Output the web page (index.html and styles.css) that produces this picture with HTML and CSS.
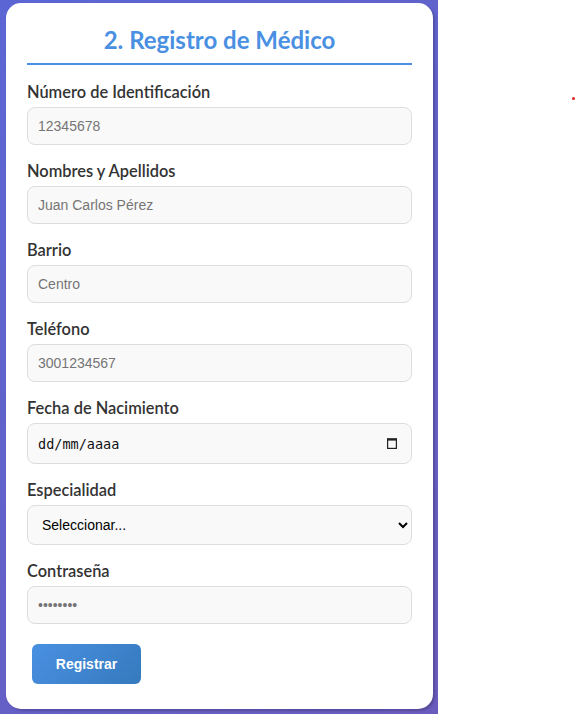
FILE: index.html
```html
<!DOCTYPE html>
<html lang="es">
<head>
<meta charset="utf-8">
<title>Registro de Médico</title>
<link rel="stylesheet" href="styles.css">
</head>
<body>
<div class="stage">
  <form class="card">
    <h2 class="title">2. Registro de Médico</h2>
    <div class="group">
      <label class="label">Número de Identificación</label>
      <input class="field" type="text" placeholder="12345678">
    </div>
    <div class="group">
      <label class="label">Nombres y Apellidos</label>
      <input class="field" type="text" placeholder="Juan Carlos Pérez">
    </div>
    <div class="group">
      <label class="label">Barrio</label>
      <input class="field" type="text" placeholder="Centro">
    </div>
    <div class="group">
      <label class="label">Teléfono</label>
      <input class="field" type="text" placeholder="3001234567">
    </div>
    <div class="group">
      <label class="label">Fecha de Nacimiento</label>
      <div class="field date">
        <span class="date-text">dd/mm/aaaa</span>
        <svg class="cal" width="12" height="13" viewBox="0 0 12 13" aria-hidden="true">
          <rect x="1.6" y="2" width="8.8" height="9.4" fill="none" stroke="#222222" stroke-width="1.2"/>
          <rect x="1" y="1.4" width="10" height="2.2" fill="#222222"/>
        </svg>
      </div>
    </div>
    <div class="group">
      <label class="label">Especialidad</label>
      <select class="field select">
        <option>Seleccionar...</option>
      </select>
    </div>
    <div class="group">
      <label class="label">Contraseña</label>
      <input class="field" type="password" placeholder="••••••••">
    </div>
    <button class="btn" type="button">Registrar</button>
  </form>
</div>
<div class="dot"></div>
</body>
</html>
```
FILE: styles.css
```css
html, body {
  margin: 0;
  padding: 0;
  background: #ffffff;
}
body {
  display: flex;
  align-items: flex-start;
  min-height: 714px;
}
.stage {
  width: 438px;
  height: 714px;
  box-sizing: border-box;
  padding: 3px 5px 0 6px;
  background: linear-gradient(135deg, #5b66d4 0%, #6a5cbd 100%);
}
.card {
  width: 427px;
  box-sizing: border-box;
  background: #ffffff;
  border-radius: 15px;
  padding: 20px 21px 25px;
  box-shadow: 2px 2px 2px rgba(0, 0, 0, 0.18);
}
.title {
  margin: 4px 0 18px;
  padding-bottom: 10px;
  border-bottom: 2px solid #4a90e2;
  text-align: center;
  color: #4a90e2;
  font-family: Lato, "Open Sans", sans-serif;
  font-weight: 700;
  font-size: 24px;
  line-height: 26px;
}
.group {
  margin-bottom: 17px;
}
.label {
  display: block;
  margin-bottom: 7px;
  font-family: Lato, "Open Sans", sans-serif;
  font-weight: 600;
  font-size: 16.4px;
  line-height: 17px;
  color: #333333;
}
.field {
  display: block;
  width: 100%;
  height: 38px;
  box-sizing: border-box;
  padding: 0 10px;
  border: 1px solid #dddddd;
  border-radius: 8px;
  background: #f9f9f9;
  font-family: "Liberation Sans", Arial, sans-serif;
  font-size: 14px;
  color: #333333;
  outline: none;
}
.field::placeholder {
  color: #757575;
}
.date {
  display: flex;
  align-items: center;
  justify-content: space-between;
  height: 41px;
  padding: 0 13px 0 10px;
}
.date-text {
  font-family: "DejaVu Sans Mono", monospace;
  font-size: 13.5px;
  color: #111111;
}
.cal {
  display: block;
}
.select {
  height: 40px;
  padding-left: 10px;
  color: #000000;
}
.btn {
  display: block;
  margin: 20px 0 0 5px;
  width: 109px;
  height: 40px;
  border: none;
  border-radius: 6px;
  background: linear-gradient(135deg, #4a90e2 0%, #357abd 100%);
  color: #ffffff;
  font-family: "Liberation Sans", Arial, sans-serif;
  font-weight: 700;
  font-size: 14px;
  cursor: pointer;
}
.dot {
  position: absolute;
  left: 572px;
  top: 97px;
  width: 3px;
  height: 3px;
  border-radius: 50%;
  background: #dd2222;
}
```
